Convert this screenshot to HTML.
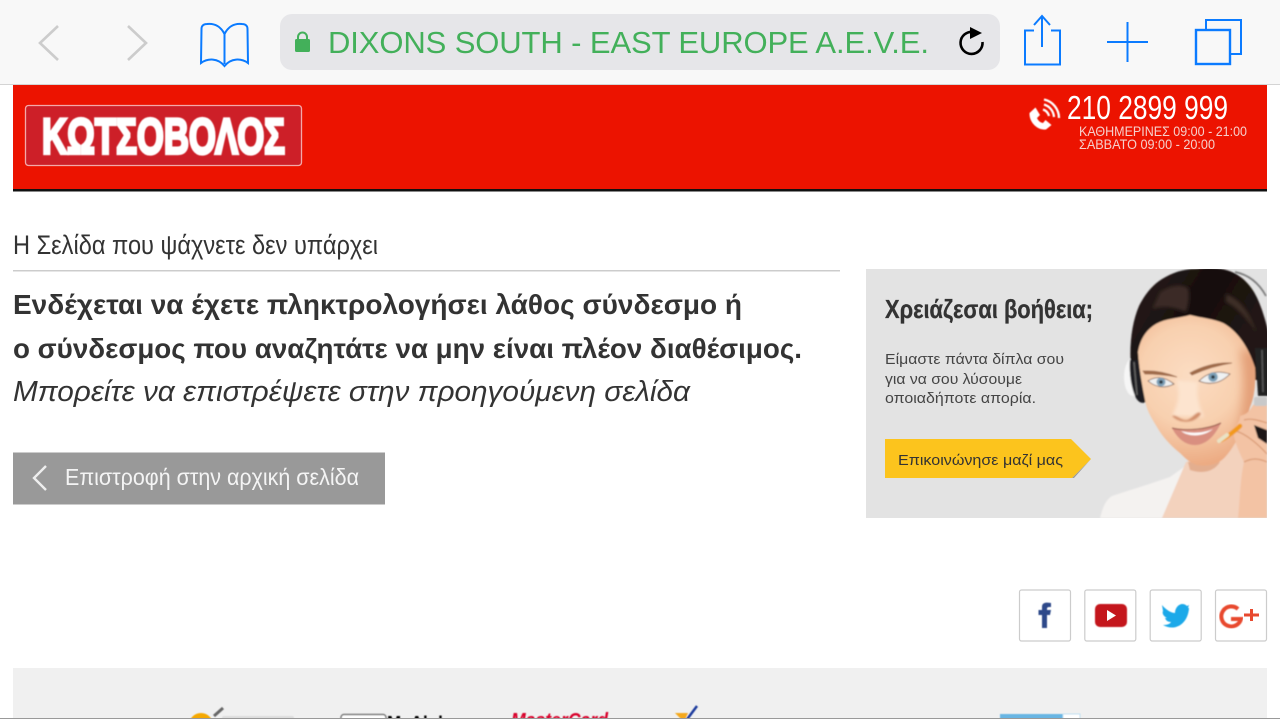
<!DOCTYPE html>
<html lang="el">
<head>
<meta charset="utf-8">
<title>Κωτσόβολος</title>
<style>
html,body{margin:0;padding:0;background:#fff;width:1280px;height:719px;overflow:hidden}
svg{display:block}
text{font-family:"Liberation Sans","DejaVu Sans",sans-serif}
</style>
</head>
<body>
<svg xmlns="http://www.w3.org/2000/svg" width="1280" height="719" viewBox="0 0 1280 719">
<defs>
<filter id="b05" x="-10%" y="-10%" width="120%" height="120%"><feGaussianBlur stdDeviation="0.4"/></filter>
<filter id="b1" x="-10%" y="-10%" width="120%" height="120%"><feGaussianBlur stdDeviation="0.7"/></filter>
<filter id="b2" x="-30%" y="-30%" width="160%" height="160%"><feGaussianBlur stdDeviation="1.5"/></filter>
<filter id="b4" x="-40%" y="-40%" width="180%" height="180%"><feGaussianBlur stdDeviation="5"/></filter>
<clipPath id="panel"><rect x="866" y="269" width="401" height="249"/></clipPath>
<clipPath id="foot"><rect x="0" y="660" width="1280" height="58"/></clipPath>
<clipPath id="faceclip"><path d="M1138 352 C1140 340 1146 328 1160 322 C1170 318 1180 318 1190 315 C1202 318 1214 319 1223 323 C1236 330 1248 345 1255 368 C1256 385 1254 398 1250 407 C1246 420 1242 432 1237 440 C1230 452 1224 460 1217 463 C1210 466 1203 466 1197 465 C1190 463 1185 458 1180 453 C1170 445 1162 436 1157 427 C1150 416 1146 408 1145 400 C1142 385 1139 368 1138 352 Z"/></clipPath>
<radialGradient id="skin" gradientUnits="userSpaceOnUse" cx="1190" cy="375" r="90">
<stop offset="0" stop-color="#fbdcc2"/><stop offset=".55" stop-color="#f8d0af"/><stop offset="1" stop-color="#ecab83"/>
</radialGradient>
<linearGradient id="hair" gradientUnits="userSpaceOnUse" x1="1150" y1="280" x2="1250" y2="340">
<stop offset="0" stop-color="#241a17"/><stop offset=".45" stop-color="#160e0d"/><stop offset="1" stop-color="#221714"/>
</linearGradient>
</defs>

<rect width="1280" height="719" fill="#fff"/>

<!-- Browser bar -->
<rect width="1280" height="84" fill="#f8f8f8"/>
<rect y="84" width="1280" height="1" fill="#d4d4d4"/>
<path d="M58 26 L40 43 L58 60" fill="none" stroke="#ccc" stroke-width="2.6"/>
<path d="M128 26 L146 43 L128 60" fill="none" stroke="#ccc" stroke-width="2.6"/>
<path d="M224.500 34 C221 27 215 23 207 24 C204 24 201.500 25.500 201.500 29 L201 63 C208 58 218 58 224.500 66 C231 58 241 58 248 63 L247.500 29 C247.500 25.500 245 24 242 24 C234 23 228 27 224.500 34 Z M224.500 34 V64" fill="none" stroke="#0b7bff" stroke-width="2"/>
<rect x="280" y="14" width="720" height="56" rx="12" fill="#e6e6e9"/>
<rect x="295" y="39" width="15" height="13" rx="1.500" fill="#43b05a"/>
<path d="M298 40 V37 a4.500 4.500 0 0 1 9 0 V40" fill="none" stroke="#43b05a" stroke-width="2"/>
<text x="328" y="53" font-size="31" fill="#43b05a" textLength="601">DIXONS SOUTH - EAST EUROPE A.E.V.E.</text>
<path d="M973 32 A11 11 0 1 0 982.500 42" fill="none" stroke="#000" stroke-width="2.600"/>
<path d="M970 27 L982 33 L970 39 Z" fill="#000"/>
<path d="M1034 30.500 H1025 V64.500 H1060 V30.500 H1051" fill="none" stroke="#0b7bff" stroke-width="2"/>
<path d="M1042 47 V16 M1034 25 L1042 16 L1050 25" fill="none" stroke="#0b7bff" stroke-width="2"/>
<path d="M1107 42 H1148 M1127.500 22 V62" fill="none" stroke="#0b7bff" stroke-width="2"/>
<rect x="1196" y="30" width="34" height="34" fill="none" stroke="#0b7bff" stroke-width="2.400"/>
<path d="M1206 29 V20 H1241 V54 H1231" fill="none" stroke="#0b7bff" stroke-width="2"/>

<!-- Red header -->
<rect x="13" y="85" width="1254" height="104" fill="#ec1300"/>
<rect x="13" y="189" width="1254" height="2.500" fill="#111"/>
<rect x="25.500" y="105.500" width="276" height="60" rx="3" fill="#cd1f28" stroke="#f3a9a9" stroke-width="1.300"/>
<text x="42" y="153.500" font-size="50" font-weight="700" fill="#fff" stroke="#fff" stroke-width="3.200" textLength="243" lengthAdjust="spacingAndGlyphs" filter="url(#b05)">ΚΩΤΣΟΒΟΛΟΣ</text>

<!-- Phone icon -->
<g filter="url(#b05)">
<path d="M1029.500 113 L1035.500 107.500 L1040 115 L1037 118 C1038 120.500 1040 122.500 1043 123 L1045.500 120 L1051.500 125 L1046 129.500 C1037 130.500 1029 122 1029.500 113 Z" fill="#fff"/>
<g fill="none" stroke="#fff" stroke-width="2.300">
<path d="M1043 109.500 A9 9 0 0 1 1049 116"/>
<path d="M1044 104.500 A14 14 0 0 1 1054 117"/>
<path d="M1044 99.500 A19 19 0 0 1 1059 118"/>
</g>
</g>
<text x="1067" y="119" font-size="33" fill="#fff" textLength="161" lengthAdjust="spacingAndGlyphs">210 2899 999</text>
<text x="1079" y="136" font-size="14" fill="#f5d0cc" textLength="168" lengthAdjust="spacingAndGlyphs">ΚΑΘΗΜΕΡΙΝΕΣ 09:00 - 21:00</text>
<text x="1079" y="149" font-size="14" fill="#f5d0cc" textLength="136" lengthAdjust="spacingAndGlyphs">ΣΑΒΒΑΤΟ 09:00 - 20:00</text>

<!-- Main copy -->
<text x="13" y="254" font-size="27" fill="#333" textLength="365" lengthAdjust="spacingAndGlyphs">Η Σελίδα που ψάχνετε δεν υπάρχει</text>
<rect x="13" y="270" width="827" height="1.500" fill="#ccc"/>
<text x="13" y="314" font-size="28" font-weight="700" fill="#333" textLength="729" lengthAdjust="spacingAndGlyphs">Ενδέχεται να έχετε πληκτρολογήσει λάθος σύνδεσμο ή</text>
<text x="13" y="358" font-size="28" font-weight="700" fill="#333" textLength="789" lengthAdjust="spacingAndGlyphs">ο σύνδεσμος που αναζητάτε να μην είναι πλέον διαθέσιμος.</text>
<text x="13" y="401" font-size="29" font-style="italic" fill="#333" textLength="677" lengthAdjust="spacingAndGlyphs">Μπορείτε να επιστρέψετε στην προηγούμενη σελίδα</text>

<!-- Back button -->
<rect x="13" y="452.500" width="372" height="52" fill="#999"/>
<path d="M46 466 L34 478 L46 490" fill="none" stroke="#eee" stroke-width="2.400"/>
<text x="65" y="485" font-size="23" fill="#f4f4f4" textLength="294" lengthAdjust="spacingAndGlyphs">Επιστροφή στην αρχική σελίδα</text>

<!-- Help panel -->
<rect x="866" y="269" width="401" height="249" fill="#e3e3e3"/>
<text x="885" y="318" font-size="26" font-weight="700" fill="#333" stroke="#333" stroke-width=".3" textLength="208" lengthAdjust="spacingAndGlyphs">Χρειάζεσαι βοήθεια;</text>
<text x="885" y="364" font-size="15" fill="#444" textLength="179" lengthAdjust="spacingAndGlyphs">Είμαστε πάντα δίπλα σου</text>
<text x="885" y="384" font-size="15" fill="#444" textLength="137" lengthAdjust="spacingAndGlyphs">για να σου λύσουμε</text>
<text x="885" y="403" font-size="15" fill="#444" textLength="151" lengthAdjust="spacingAndGlyphs">οποιαδήποτε απορία.</text>
<path d="M1072 478 L1091 459 L1074 478 Z" fill="#999"/>
<path d="M885 439 H1071 L1091 459 L1072 478 H885 Z" fill="#fcc41d"/>
<text x="898" y="465" font-size="15" fill="#333" textLength="165" lengthAdjust="spacingAndGlyphs">Επικοινώνησε μαζί μας</text>

<!-- Portrait -->
<g clip-path="url(#panel)">
<g filter="url(#b1)">
<path d="M1100 518 C1103 506 1106 500 1112 496 C1130 490 1150 484 1170 477 L1184 467 L1190 470 L1162 518 Z" fill="#f4f2f0"/>
<path d="M1162 518 L1174 490 L1186 462 L1240 440 L1262 518 Z" fill="#f3d2bd"/>
<path d="M1220 462 C1215 470 1205 475 1190 470 L1188 462 Z" fill="#e3ae8f"/>
<ellipse cx="1133" cy="377" rx="9" ry="19" fill="#f6f6f6"/>
<path d="M1131 368 C1129 345 1132 322 1139 306 C1146 292 1154 284 1162 279 C1172 273 1182 269 1196 269 C1212 267 1226 268 1236 274 C1248 281 1256 292 1262 310 C1266 322 1270 335 1270 350 V380 H1254 L1138 380 Z" fill="url(#hair)"/>
<path d="M1160 292 C1172 284 1182 284 1188 288 C1190 298 1188 306 1186 312 C1176 308 1165 305 1152 309 Z" fill="#3a2a26" filter="url(#b2)"/>
<path d="M1226 294 C1240 299 1250 312 1256 332 C1248 320 1238 308 1226 302 Z" fill="#3d2d28" filter="url(#b2)"/>
<path d="M1130 360 H1140 L1148 398 C1147 404 1140 405 1136 398 C1131 388 1129 372 1130 360 Z" fill="#1f1f20"/>
<path d="M1134 362 L1137 395" stroke="#6a6a6a" stroke-width="1.300" fill="none"/>
<path d="M1255 348 H1270 V396 H1258 Z" fill="#232324"/>
<path d="M1262 350 L1263 392" stroke="#5f5f5f" stroke-width="1.300" fill="none"/>
<path d="M1235 272 C1250 275 1260 285 1266 296" stroke="#777" stroke-width="1.700" fill="none"/>
<path d="M1138 352 C1140 340 1146 328 1160 322 C1170 318 1180 318 1190 315 C1202 318 1214 319 1223 323 C1236 330 1248 345 1255 368 C1256 385 1254 398 1250 407 C1246 420 1242 432 1237 440 C1230 452 1224 460 1217 463 C1210 466 1203 466 1197 465 C1190 463 1185 458 1180 453 C1170 445 1162 436 1157 427 C1150 416 1146 408 1145 400 C1142 385 1139 368 1138 352 Z" fill="url(#skin)"/>
<g clip-path="url(#faceclip)">
<path d="M1240 350 L1260 350 L1260 430 L1236 440 C1244 410 1246 380 1240 350 Z" fill="#e39f77" filter="url(#b4)"/>
<path d="M1176 380 C1182 395 1176 408 1172 416 L1204 417 C1198 405 1196 392 1198 382 Z" fill="#fde4cf" filter="url(#b2)"/>
<path d="M1172 416 C1180 424 1194 424 1201 414 C1198 408 1192 420 1186 420 C1180 420 1176 414 1172 416 Z" fill="#d28f6c" filter="url(#b1)"/>
</g>
<path d="M1143 371 Q1160 370 1177 377 Q1160 374 1145 374 Z" fill="#9f6a4a" stroke="#9f6a4a" stroke-width=".8"/>
<path d="M1190 373 Q1210 362 1232 363 Q1212 366 1192 375 Z" fill="#9f6a4a" stroke="#9f6a4a" stroke-width=".8"/>
<path d="M1148 381 Q1160 373 1174 384 Q1160 391 1148 381 Z" fill="#eff1f2" stroke="#7c5a4c" stroke-width=".8"/>
<circle cx="1161" cy="382" r="4.500" fill="#7da0b8"/><circle cx="1161" cy="382" r="1.800" fill="#26303a"/>
<path d="M1199 381 Q1212 368 1230 374 Q1216 388 1199 381 Z" fill="#eff1f2" stroke="#7c5a4c" stroke-width=".8"/>
<circle cx="1213" cy="377" r="4.800" fill="#7da0b8"/><circle cx="1213" cy="377" r="1.800" fill="#26303a"/>
<path d="M1172 428 C1185 432 1206 431 1221 423 C1214 438 1204 446 1193 445 C1183 444 1176 436 1172 428 Z" fill="#d98f80"/>
<path d="M1181 431 C1192 434 1204 433 1213 429 C1205 436 1190 438 1181 431 Z" fill="#fff"/>
<path d="M1172 428 C1185 431 1206 430 1221 423" fill="none" stroke="#8d4c40" stroke-width="1"/>
<path d="M1267 398 V518 H1238 C1240 500 1240 480 1244 462 C1238 450 1234 440 1233 430 C1238 424 1240 420 1240 416 C1248 414 1250 410 1253 405 C1258 402 1262 400 1267 398 Z" fill="#f3c3a4"/>
<path d="M1244 420 C1250 418 1258 420 1267 423 M1236 431 C1246 434 1258 444 1267 454 M1244 462 C1252 458 1258 458 1267 462" fill="none" stroke="#d99a74" stroke-width="1.200"/>
<path d="M1254 425 L1267 430 V444 L1258 438 Z" fill="#1c1718"/>
<rect x="1254" y="397" width="13" height="9" rx="2" fill="#c9c9c9"/>
<path d="M1221 440 C1226 438 1236 430 1240 426" stroke="#f29a1e" stroke-width="4.500" stroke-linecap="round" fill="none"/>
<path d="M1219 441 L1227 435" stroke="#e9e2c4" stroke-width="4" stroke-linecap="round"/>
</g>
</g>

<!-- Social icons -->
<g fill="#fff" stroke="#ccc" stroke-width="1.200">
<rect x="1019.500" y="590" width="51" height="51" rx="2"/>
<rect x="1084.800" y="590" width="51" height="51" rx="2"/>
<rect x="1150.200" y="590" width="51" height="51" rx="2"/>
<rect x="1215.500" y="590" width="51" height="51" rx="2"/>
</g>
<path d="M1042 628 V615 H1038.500 V610 H1042 V607 C1042 603 1045 602 1051 603 V607 C1048 607 1047 607 1047 609 V610 H1051 L1050 615 H1047 V628 Z" fill="#2f4a8a" filter="url(#b05)"/>
<rect x="1095" y="604" width="32" height="23" rx="5" fill="#c4151c" filter="url(#b05)"/>
<path d="M1107 610 L1116 615.500 L1107 621 Z" fill="#fff"/>
<path d="M1162 605 C1167 611 1172 613 1175 613 C1175 606 1182 601 1187 606 L1189 605 L1188 608 L1189 608 C1188 624 1175 632 1163 625 C1167 625 1170 624 1171 622 C1167 622 1166 620 1165 618 L1167 618 C1163 616 1162 613 1163 611 Z" fill="#1ba9e9" filter="url(#b05)"/>
<path d="M1238 609 A10 10 0 1 0 1241 619 H1231" fill="none" stroke="#e8492f" stroke-width="4" filter="url(#b05)"/>
<path d="M1244 615 H1259 M1251.500 609 V621" fill="none" stroke="#e8492f" stroke-width="3"/>

<!-- Footer strip -->
<rect x="13" y="668" width="1254" height="51" fill="#f0f0f0"/>
<g clip-path="url(#foot)" filter="url(#b05)">
<circle cx="201" cy="725" r="12" fill="#f5a800"/>
<path d="M214 716 L223 708" stroke="#666" stroke-width="3"/>
<rect x="222" y="716" width="72" height="8" rx="2" fill="#ddd"/>
<rect x="341" y="714.500" width="45" height="12" rx="3" fill="#fff" stroke="#777" stroke-width="1.500"/>
<text x="387" y="729" font-size="18" font-weight="700" fill="#000" textLength="71" lengthAdjust="spacingAndGlyphs">MyAlpha</text>
<text x="511" y="727" font-size="20" font-weight="700" font-style="italic" fill="#d8002a" textLength="97" lengthAdjust="spacingAndGlyphs">MasterCard</text>
<path d="M675 713 L688 713 L684 722 Z" fill="#f5a81c"/>
<path d="M685 722 L697 706" stroke="#1a3a9c" stroke-width="2.500"/>
<rect x="1000" y="714" width="63" height="6" fill="#68b5e3"/>
<rect x="1063" y="714" width="17" height="6" fill="#fff" stroke="#bfe0f2"/>
</g>
<rect y="718" width="1280" height="1" fill="#999"/>
</svg>
</body>
</html>
